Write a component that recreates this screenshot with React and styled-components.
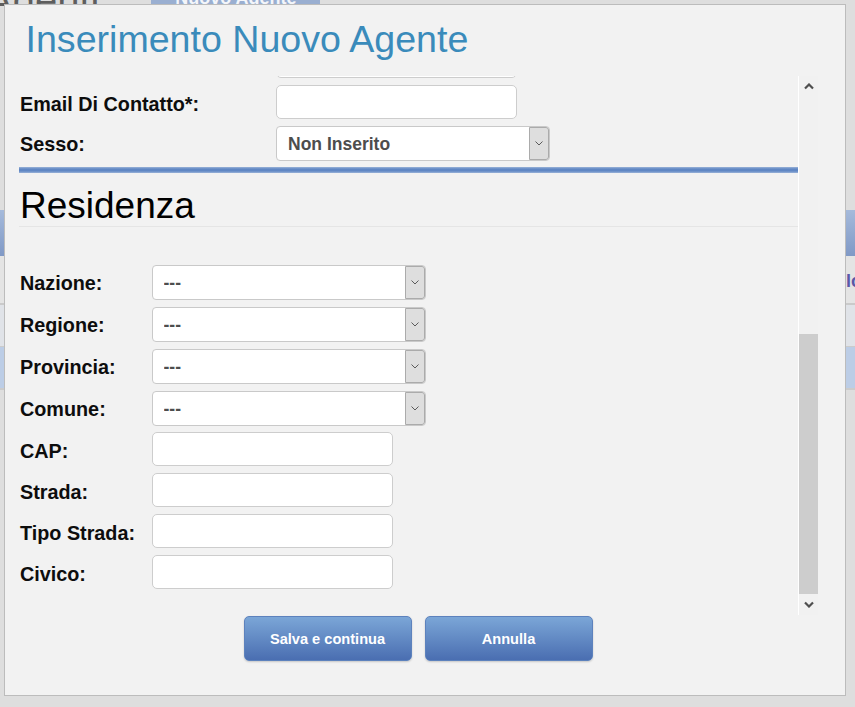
import React, { useLayoutEffect, useRef, useState } from 'react';
import styled, { createGlobalStyle } from 'styled-components';

const GlobalStyle = createGlobalStyle`
  html, body {
    margin: 0;
    padding: 0;
    overflow: hidden;
  }
  body {
    background: #dedede;
    font-family: 'Liberation Sans', Arial, sans-serif;
  }
  * {
    box-sizing: border-box;
  }
`;

/* ---------- page behind the modal ---------- */

const Page = styled.div`
  height: 760px;
  margin-top: -22px;
`;

const PageHeader = styled.header`
  display: flex;
  align-items: flex-start;
  height: 48px;
`;

const PageTitle = styled.h1`
  margin: 0 0 0 -14px;
  font-size: 40px;
  line-height: 44px;
  font-weight: normal;
  color: #5e5e5e;
`;

const Tab = styled.div`
  margin-left: 52px;
  width: 169px;
  height: 36px;
  padding-top: 5px;
  background: #9aafd1;
  color: #f4f6fa;
  font-size: 18px;
  font-weight: bold;
  line-height: 30px;
  text-align: center;
`;

const AgentTable = styled.section`
  margin-top: 184px;
`;

const TableCaption = styled.div`
  height: 46px;
  padding-left: 20px;
  background: linear-gradient(#a5badb, #8099c6);
  color: #fff;
  font-size: 18px;
  font-weight: bold;
  line-height: 46px;
`;

const ColumnsRow = styled.div`
  display: grid;
  grid-template-columns: repeat(3, 1fr) 44px;
  align-items: center;
  height: 49px;
  padding-top: 4px;
  background: #e4e4e4;
  border-bottom: 2px solid #cacaca;
`;

const ColumnLink = styled.span`
  padding-left: ${p => (p.$flush ? 0 : 20)}px;
  color: #5a58a8;
  font-size: 18px;
  font-weight: bold;
  white-space: nowrap;
`;

const DataRow = styled.div`
  height: ${p => p.$height}px;
  background: ${p => p.$bg};
  border-bottom: ${p => p.$border}px solid #cbcbcb;
`;

/* ---------- modal ---------- */

const Dialog = styled.div`
  position: fixed;
  left: 4px;
  top: 4px;
  width: 842px;
  height: 692px;
  display: flex;
  flex-direction: column;
  background: #f2f2f2;
  border: 1px solid #bcbcbc;
`;

const DialogTitle = styled.h2`
  margin: 16px 0 0 20.5px;
  font-size: 37.6px;
  line-height: 37px;
  font-weight: normal;
  color: #3a8bbb;
`;

const ScrollFrame = styled.div`
  display: flex;
  flex-shrink: 0;
  margin: 18px 0 0 14px;
  width: 799px;
  height: 539px;
`;

const ScrollArea = styled.div`
  flex: 1;
  min-width: 0;
  overflow-y: scroll;
  overflow-x: hidden;
  scrollbar-width: none;

  &::-webkit-scrollbar {
    display: none;
  }
`;

const ScrollBar = styled.div`
  display: flex;
  flex-direction: column;
  width: 20px;
  background: #f1f1f1;
  border-left: 1px solid #fff;
`;

const ScrollButton = styled.div`
  display: flex;
  justify-content: center;
  align-items: ${p => (p.$down ? 'flex-start' : 'flex-end')};
  height: 21px;
  padding: ${p => (p.$down ? '7px 0 0' : '0 0 7px')};
  flex-shrink: 0;
`;

const Track = styled.div`
  flex: 1;
  display: flex;
  flex-direction: column;
`;

const Thumb = styled.div`
  background: #cdcdcd;
  flex-shrink: 0;
`;

const FormContent = styled.div`
  padding-bottom: 26px;
`;

const SectionTitle = styled.h3`
  margin: ${p => (p.$first ? 10 : 13)}px 0 38px;
  padding-left: 1px;
  font-size: 37px;
  line-height: 40px;
  font-weight: normal;
  color: #000;
  border-bottom: 1px solid #e5e5e5;
`;

const Divider = styled.div`
  margin-top: 6px;
  height: 6px;
  background: linear-gradient(#9ab3d8, #6087c4 35%, #6087c4 65%, #9ab3d8);
`;

const Fields = styled.div`
  display: flex;
  flex-direction: column;
  gap: 7px;
  & + & {
    margin-top: 6px;
  }
`;

const Row = styled.div`
  display: grid;
  grid-template-columns: ${p => p.$labelWidth}px auto;
  align-items: center;
`;

const Label = styled.label`
  padding-top: ${p => (p.$nudge ? 5 : 1)}px;
  padding-left: 1px;
  font-size: 19.8px;
  font-weight: bold;
  color: #0d0d0d;
  white-space: nowrap;
`;

const TextInput = styled.input`
  width: 241px;
  height: 34px;
  padding: 0 10px;
  background: #fff;
  border: 1px solid #cdcdcd;
  border-radius: 5px;
  font-family: 'Liberation Sans', Arial, sans-serif;
  font-size: 17.5px;
  outline: none;
`;

const SelectBox = styled.div`
  display: flex;
  width: 274px;
  height: 35px;
  background: #fff;
  border: 1px solid #c9c9c9;
  border-radius: 4px;
`;

const SelectField = styled.select`
  flex: 1;
  min-width: 0;
  padding: 0 0 0 11px;
  appearance: none;
  background: transparent;
  border: none;
  outline: none;
  color: #4d4d4d;
  font-family: 'Liberation Sans', Arial, sans-serif;
  font-size: 17.5px;
  font-weight: bold;
`;

const ArrowBox = styled.span`
  display: flex;
  align-items: center;
  justify-content: center;
  width: 20px;
  background: #dedede;
  border: 1px solid #ababab;
  border-radius: 0 3px 3px 0;
`;

const ButtonRow = styled.div`
  display: flex;
  justify-content: center;
  gap: 13px;
  margin-top: 1px;
  padding-right: 14px;
`;

const ActionButton = styled.button`
  width: 168px;
  height: 45px;
  background: linear-gradient(#7ba6d7, #4a6eb1);
  border: 1px solid #5d82bd;
  border-radius: 5px;
  box-shadow: 0 1px 2px rgba(0, 0, 0, 0.18);
  color: #fff;
  font-family: 'Liberation Sans', Arial, sans-serif;
  font-size: 14.6px;
  font-weight: bold;
  cursor: pointer;
`;

const Chevron = () => (
  <svg width="8" height="5" viewBox="0 0 8 5">
    <polyline points="0.5,0.5 4,4 7.5,0.5" fill="none" stroke="#5a5a5a" strokeWidth="1" />
  </svg>
);

const ScrollArrow = ({ down }) => (
  <svg width="10" height="7" viewBox="0 0 10 7">
    <path
      d={down ? 'M1 1.5 L5 5.5 L9 1.5' : 'M1 5.5 L5 1.5 L9 5.5'}
      fill="none"
      stroke="#4f4f4f"
      strokeWidth="2.2"
    />
  </svg>
);

const Select = ({ value }) => (
  <SelectBox>
    <SelectField defaultValue={value}>
      <option>{value}</option>
    </SelectField>
    <ArrowBox>
      <Chevron />
    </ArrowBox>
  </SelectBox>
);

const personalFields = [
  'Nome*:',
  'Cognome*:',
  'Username*:',
  'Password*:',
  'Codice Fiscale*:',
  'Partita IVA:',
  'Data Di Nascita:',
  'Luogo Di Nascita:',
  'Telefono:',
  'Cellulare:',
];

const placeFields = ['Nazione:', 'Regione:', 'Provincia:', 'Comune:'];
const addressFields = ['CAP:', 'Strada:', 'Tipo Strada:', 'Civico:'];

const TRACK = 539 - 42;

export default function App() {
  const scrollRef = useRef(null);
  const [thumb, setThumb] = useState({ top: 0, size: TRACK });

  const measure = () => {
    const el = scrollRef.current;
    if (!el) return;
    const size = Math.round((TRACK * el.clientHeight) / el.scrollHeight);
    const range = el.scrollHeight - el.clientHeight;
    const top = range > 0 ? Math.round(((TRACK - size) * el.scrollTop) / range) : 0;
    setThumb({ top, size });
  };

  useLayoutEffect(() => {
    const el = scrollRef.current;
    if (el) el.scrollTop = el.scrollHeight;
    measure();
  }, []);

  return (
    <>
      <GlobalStyle />
      <Page>
        <PageHeader>
          <PageTitle>Agenti</PageTitle>
          <Tab>Nuovo Agente</Tab>
        </PageHeader>
        <AgentTable>
          <TableCaption>Elenco Agenti</TableCaption>
          <ColumnsRow>
            <ColumnLink>Nome</ColumnLink>
            <ColumnLink>Cognome</ColumnLink>
            <ColumnLink>Email</ColumnLink>
            <ColumnLink $flush>Ruolo</ColumnLink>
          </ColumnsRow>
          <DataRow $height={42} $bg="#e0e3e8" $border={1} />
          <DataRow $height={43} $bg="#bccde6" $border={2} />
        </AgentTable>
      </Page>

      <Dialog>
        <DialogTitle>Inserimento Nuovo Agente</DialogTitle>
        <ScrollFrame>
          <ScrollArea ref={scrollRef} onScroll={measure}>
            <FormContent>
              <SectionTitle $first>Dati Personali</SectionTitle>
              <Fields>
                {personalFields.map(name => (
                  <Row key={name} $labelWidth={257}>
                    <Label $nudge>{name}</Label>
                    <TextInput type="text" />
                  </Row>
                ))}
                <Row $labelWidth={257}>
                  <Label $nudge>Email Di Contatto*:</Label>
                  <TextInput type="text" />
                </Row>
                <Row $labelWidth={257}>
                  <Label>Sesso:</Label>
                  <Select value="Non Inserito" />
                </Row>
              </Fields>

              <Divider />
              <SectionTitle>Residenza</SectionTitle>

              <Fields>
                {placeFields.map(name => (
                  <Row key={name} $labelWidth={132.5}>
                    <Label>{name}</Label>
                    <Select value="---" />
                  </Row>
                ))}
              </Fields>
              <Fields>
                {addressFields.map(name => (
                  <Row key={name} $labelWidth={132.5}>
                    <Label $nudge>{name}</Label>
                    <TextInput type="text" />
                  </Row>
                ))}
              </Fields>
            </FormContent>
          </ScrollArea>
          <ScrollBar>
            <ScrollButton>
              <ScrollArrow />
            </ScrollButton>
            <Track>
              <Thumb style={{ marginTop: thumb.top, height: thumb.size }} />
            </Track>
            <ScrollButton $down>
              <ScrollArrow down />
            </ScrollButton>
          </ScrollBar>
        </ScrollFrame>
        <ButtonRow>
          <ActionButton type="button">Salva e continua</ActionButton>
          <ActionButton type="button">Annulla</ActionButton>
        </ButtonRow>
      </Dialog>
    </>
  );
}
